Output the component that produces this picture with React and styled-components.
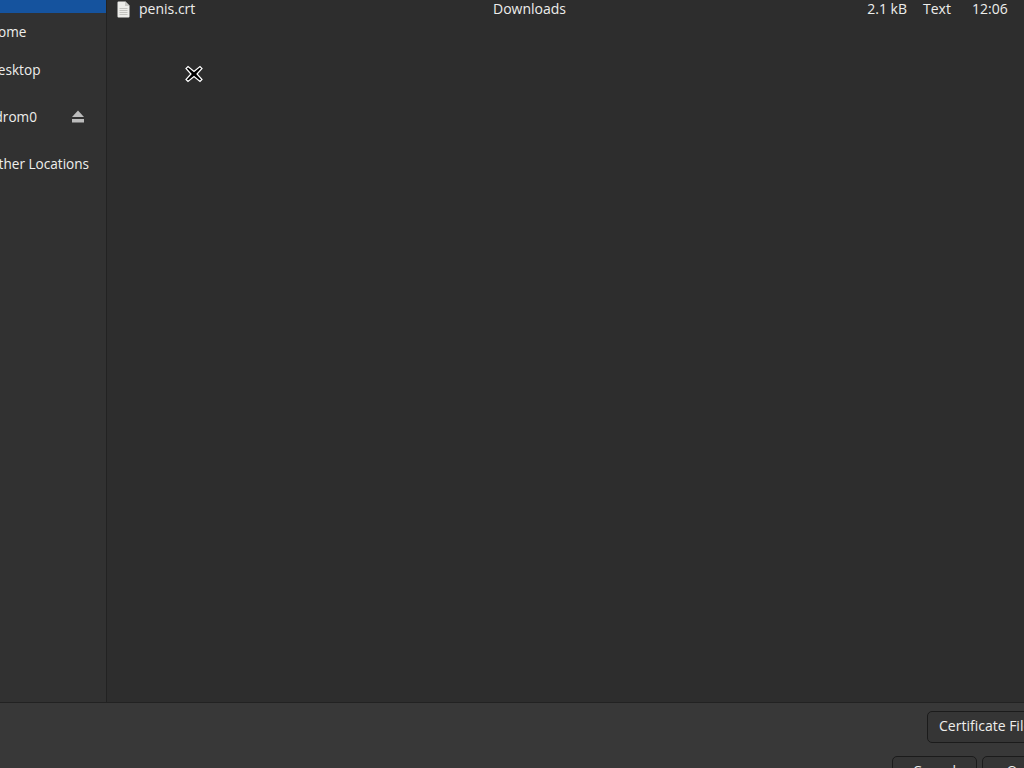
import React from 'react'
import styled, { createGlobalStyle } from 'styled-components'

const Global = createGlobalStyle`
  html, body {
    margin: 0;
    padding: 0;
    background: #2d2d2d;
  }
  body {
    font-family: 'Open Sans', 'Noto Sans', sans-serif;
    font-size: 14px;
    color: #eeeeec;
  }
`
// the dialog is bigger than the screen, it hangs off left and bottom
const Screen = styled.div`
  position: relative;
  width: 1024px;
  height: 768px;
  overflow: hidden;
  display: flex;
  flex-direction: column;
`
const Body = styled.div`
  display: flex;
  height: 702px;
  flex: none;
`
const Sidebar = styled.nav`
  box-sizing: border-box;
  flex: none;
  width: 152px;
  margin-left: -45px;
  background: #313131;
  border-right: 1px solid #222222;
`
const SideRow = styled.div`
  box-sizing: border-box;
  height: ${(p) => p.$h || 38}px;
  margin-bottom: ${(p) => p.$gap || 0}px;
  padding-left: 33px;
  padding-right: 21px;
  display: flex;
  align-items: center;
  justify-content: space-between;
  white-space: nowrap;
  background: ${(p) => (p.$active ? '#15539e' : 'transparent')};
`
const Label = styled.span`
  padding-bottom: 2px;
  font-size: 13.6px;
`
const Files = styled.main`
  flex: 1;
  background: #2d2d2d;
`
const FileRow = styled.div`
  display: grid;
  grid-template-columns: 13px 363px 290px 124px 65px 52px;
  grid-template-rows: 18px;
  align-items: center;
  padding-left: 10px;
`
const Cell = styled.span`
  line-height: 16px;
  margin-left: ${(p) => p.$indent || 0}px;
  text-align: ${(p) => p.$align || 'left'};
`
const Footer = styled.footer`
  flex: 1;
  background: #383838;
  border-top: 1px solid #222222;
  display: flex;
  flex-direction: column;
  align-items: flex-end;
  padding: 8px 0 0;
`
const Button = styled.button`
  box-sizing: border-box;
  flex: none;
  font: inherit;
  color: #eeeeec;
  background: #353535;
  border: 1px solid #1b1b1b;
  border-radius: 5px;
  height: 32px;
  padding: 0 11px 3px;
  text-align: left;
`
const FilterWrap = styled.div`
  display: flex;
  width: 97px;
`
const FilterButton = styled(Button)`
  width: 130px;
  white-space: nowrap;
`
const Actions = styled.div`
  display: flex;
  gap: 5px;
  margin-top: 13px;
  width: 132px;
`
const ActionButton = styled(Button)`
  width: 85px;
  text-align: center;
  padding: 0 0 3px;
`
const Cursor = styled.svg`
  position: absolute;
  left: 184px;
  top: 64px;
`
const IconSvg = styled.svg`
  display: block;
`

const FileIcon = () => (
  <IconSvg width="13" height="17" viewBox="0 0 13 17">
    <path d="M1.5 0.5h7l4 4v11a1 1 0 0 1-1 1h-10a1 1 0 0 1-1-1v-14a1 1 0 0 1 1-1z" fill="#ecece9" />
    <path d="M8 0.5v4.5h4.5z" fill="#c6c6c2" />
    <path d="M2.5 7.5h8M2.5 9.5h8M2.5 11.5h8M2.5 13.5h8" stroke="#c2c2be" strokeWidth="1" />
  </IconSvg>
)

const EjectIcon = () => (
  <IconSvg width="14" height="14" viewBox="0 0 14 14">
    <path d="M7 0.5L13 7H1z" fill="#bcbcbc" />
    <rect x="1" y="9" width="12" height="3.5" fill="#bcbcbc" />
  </IconSvg>
)

const App = () => {
  return (
    <Screen>
      <Global />
      <Body>
        <Sidebar>
          <SideRow $active $h={13} />
          <SideRow><Label>Home</Label></SideRow>
          <SideRow $gap={9}><Label>Desktop</Label></SideRow>
          <SideRow $gap={9}>
            <Label>cdrom0</Label>
            <EjectIcon />
          </SideRow>
          <SideRow><Label>Other Locations</Label></SideRow>
        </Sidebar>
        <Files>
          <FileRow>
            <FileIcon />
            <Cell $indent={9}>penis.crt</Cell>
            <Cell>Downloads</Cell>
            <Cell $align="right">2.1 kB</Cell>
            <Cell $indent={16}>Text</Cell>
            <Cell>12:06</Cell>
          </FileRow>
        </Files>
      </Body>
      <Footer>
        <FilterWrap>
          <FilterButton>Certificate Files</FilterButton>
        </FilterWrap>
        <Actions>
          <ActionButton>Cancel</ActionButton>
          <ActionButton>Open</ActionButton>
        </Actions>
      </Footer>
      <Cursor width="20" height="20" viewBox="0 0 20 20">
        <path
          d="M4 2.5L10 7.5L16 2.5L18 4.5L13 10L18 15.5L16 17.5L10 12.5L4 17.5L2 15.5L7 10L2 4.5z"
          fill="#000000"
          stroke="#ffffff"
          strokeWidth="1.2"
        />
      </Cursor>
    </Screen>
  )
}

export default App
